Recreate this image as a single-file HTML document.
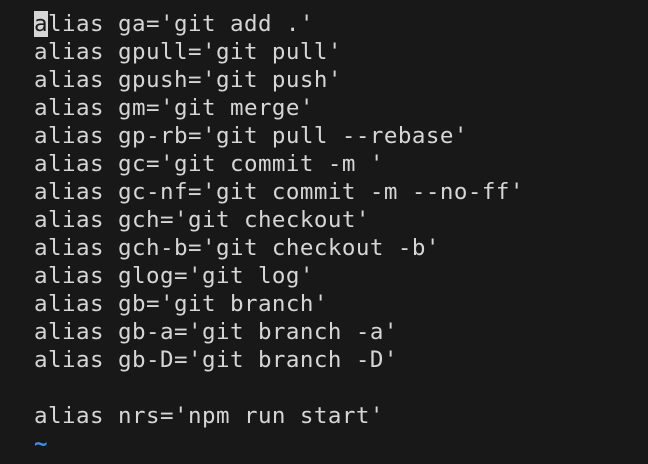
<!DOCTYPE html>
<html><head><style>
html,body{margin:0;padding:0;background:#181818;width:648px;height:464px;overflow:hidden}
pre{margin:0;position:absolute;left:34px;top:10px;font-family:"DejaVu Sans Mono",monospace;font-size:22.5px;line-height:28px;color:#d6d6d6;letter-spacing:0.45px}
.c{background:#d6d6d6;color:#181818}
.t{color:#3d8fe8;font-weight:bold}
</style></head><body>
<pre><span class="c">a</span>lias ga='git add .'
alias gpull='git pull'
alias gpush='git push'
alias gm='git merge'
alias gp-rb='git pull --rebase'
alias gc='git commit -m '
alias gc-nf='git commit -m --no-ff'
alias gch='git checkout'
alias gch-b='git checkout -b'
alias glog='git log'
alias gb='git branch'
alias gb-a='git branch -a'
alias gb-D='git branch -D'

alias nrs='npm run start'
<span class="t">~</span></pre>
</body></html>
